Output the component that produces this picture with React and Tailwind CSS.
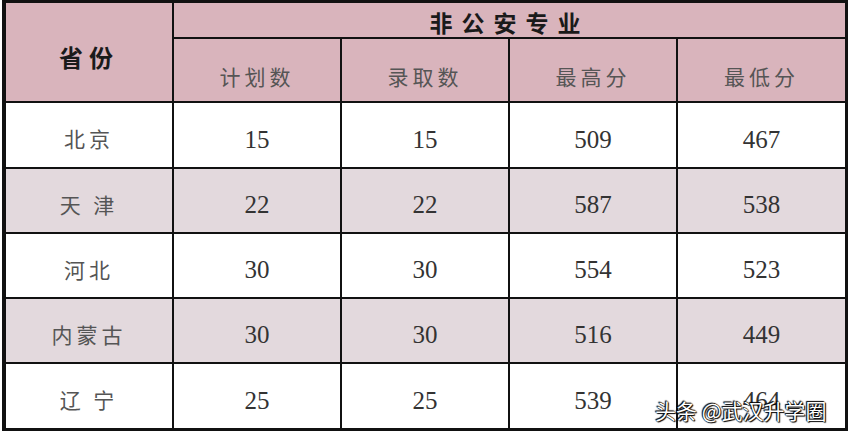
const rows = [
  { name: "北京", plan: 15, admit: 15, high: 509, low: 467 },
  { name: "天 津", plan: 22, admit: 22, high: 587, low: 538 },
  { name: "河北", plan: 30, admit: 30, high: 554, low: 523 },
  { name: "内蒙古", plan: 30, admit: 30, high: 516, low: 449 },
  { name: "辽 宁", plan: 25, admit: 25, high: 539, low: 464 },
];

const cjk = "font-['Noto_Sans_CJK_SC',sans-serif]";
const num = "font-['Liberation_Serif',serif]";

function App() {
  return (
    <div className="relative w-[848px] h-[434px] bg-white overflow-hidden">
      {/* table frame */}
      <div className="ml-[2px] w-[846px] border-l-4 border-t-[3px] border-r-2 border-b-[3px] border-[#111] bg-[#111]">
        <div className="grid grid-cols-[166px_166px_166px_166px_167px] grid-rows-[34px_62px_64px_63px_63px_63px_64px] gap-[2px]">
          {/* header */}
          <div
            className={`row-span-2 bg-[#d9b4bc] flex items-center justify-center pt-[10px] ${cjk} text-[24px] font-bold tracking-[6px] text-[#1a1a1a]`}
          >
            省份
          </div>
          <div
            className={`col-span-4 bg-[#d9b4bc] flex items-center justify-center pt-[4px] ${cjk} text-[23px] font-bold tracking-[9px] text-[#1a1a1a]`}
          >
            非公安专业
          </div>
          {["计划数", "录取数", "最高分", "最低分"].map((t) => (
            <div
              key={t}
              className={`bg-[#d9b4bc] flex items-center justify-center pt-[14px] ${cjk} text-[21px] tracking-[4px] text-[#555]`}
            >
              {t}
            </div>
          ))}

          {/* body */}
          {rows.map((r, i) => {
            const bg = i % 2 === 1 ? "bg-[#e3d9dd]" : "bg-white";
            return [
              <div
                key={r.name}
                className={`${bg} flex items-center justify-center pt-[8px] ${cjk} text-[21px] tracking-[4px] text-[#555] whitespace-pre`}
              >
                {r.name}
              </div>,
              ...[r.plan, r.admit, r.high, r.low].map((v, j) => (
                <div
                  key={r.name + j}
                  className={`${bg} flex items-center justify-center pt-[9px] ${num} text-[25px] text-[#333]`}
                >
                  {v}
                </div>
              )),
            ];
          })}
        </div>
      </div>

      {/* watermark */}
      <div
        className={`absolute left-[655px] top-[395px] ${cjk} text-[21px] text-white [text-shadow:0_0_1px_#000,0_0_1px_#000,1px_1px_1px_#000,-1px_-1px_1px_#000]`}
      >
        头条 @武汉升学圈
      </div>
    </div>
  );
}

export default App;
